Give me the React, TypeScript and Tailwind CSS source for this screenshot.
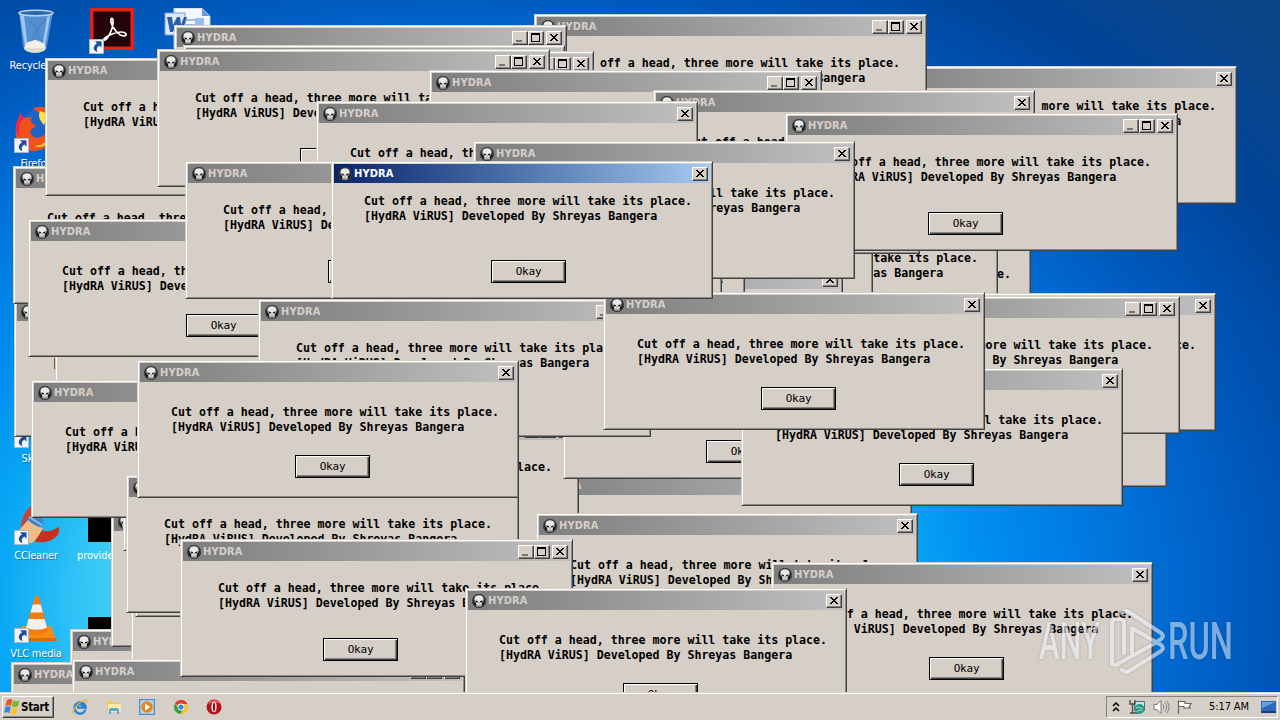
import React from "react";

type Kind = "wide" | "fixed" | "compact";
type Dialog = { x: number; t: number; kind: Kind; active?: boolean };

// Back-to-front stacking; t is the vertical centre of the caption.
const dialogs: Dialog[] = [
  { x: 855, t: 79, kind: "compact" },
  { x: 649, t: 235, kind: "fixed" },
  { x: 616, t: 219, kind: "fixed" },
  { x: 491, t: 200, kind: "fixed" },
  { x: 538, t: 129, kind: "fixed" },
  { x: 461, t: 280, kind: "fixed" },
  { x: 363, t: 240, kind: "fixed" },
  { x: 340, t: 226, kind: "fixed" },
  { x: 534, t: 27, kind: "wide" },
  { x: 174, t: 38, kind: "wide" },
  { x: 183, t: 58, kind: "fixed" },
  { x: 201, t: 64, kind: "wide" },
  { x: 14, t: 312, kind: "wide" },
  { x: 55, t: 290, kind: "fixed" },
  { x: 13, t: 179, kind: "fixed" },
  { x: 45, t: 71, kind: "wide" },
  { x: 157, t: 62, kind: "wide" },
  { x: 429, t: 83, kind: "wide" },
  { x: 653, t: 103, kind: "fixed" },
  { x: 785, t: 126, kind: "wide" },
  { x: 316, t: 114, kind: "fixed" },
  { x: 473, t: 154, kind: "fixed" },
  { x: 28, t: 232, kind: "fixed" },
  { x: 185, t: 174, kind: "wide" },
  { x: 519, t: 486, kind: "wide" },
  { x: 186, t: 431, kind: "wide" },
  { x: 563, t: 354, kind: "wide" },
  { x: 258, t: 312, kind: "wide" },
  { x: 834, t: 306, kind: "fixed" },
  { x: 785, t: 362, kind: "fixed" },
  { x: 787, t: 309, kind: "wide" },
  { x: 741, t: 381, kind: "fixed" },
  { x: 603, t: 305, kind: "fixed" },
  { x: 70, t: 642, kind: "fixed" },
  { x: 11, t: 675, kind: "fixed" },
  { x: 111, t: 522, kind: "fixed" },
  { x: 131, t: 548, kind: "fixed" },
  { x: 135, t: 492, kind: "fixed" },
  { x: 123, t: 426, kind: "fixed" },
  { x: 31, t: 393, kind: "fixed" },
  { x: 126, t: 488, kind: "wide" },
  { x: 137, t: 373, kind: "fixed" },
  { x: 72, t: 672, kind: "wide" },
  { x: 536, t: 526, kind: "fixed" },
  { x: 771, t: 575, kind: "fixed" },
  { x: 180, t: 552, kind: "wide" },
  { x: 465, t: 601, kind: "fixed" },
  { x: 331, t: 174, kind: "compact", active: true },
];

const frame: Record<Kind, string> = { wide: "w-[393px]", fixed: "w-[382px]", compact: "w-[382px]" };
const message: Record<Kind, string> = {
  wide: "mt-[20px] ml-[35px]",
  fixed: "mt-[23px] ml-[31px]",
  compact: "mt-[11px] ml-[30px]",
};
const okay: Record<Kind, string> = {
  wide: "mt-[27px] ml-[140px]",
  fixed: "mt-[20px] ml-[155px]",
  compact: "mt-[36px] ml-[157px]",
};

function Skull() {
  return (
    <svg className="h-[14px] w-[14px] shrink-0" viewBox="0 0 14 14">
      <circle cx="7" cy="7" r="6.9" fill="#141414" />
      <circle cx="7" cy="7" r="6.300" fill="none" stroke="#555" strokeWidth="0.9" />
      <path d="M2.400 5.300C2.300 2.700 4.300 1.200 7 1.200s4.700 1.500 4.600 4.100c0 1.300-.2 2.300-1 3l-.7.5-.4 3.400-.8.7-.4-1-.5 1-.8-1-.8 1-.5-1-.4 1-.8-.7-.4-3.400-.7-.5c-.8-.7-1-1.700-1-3z" fill="#e9e9e9" />
      <path d="M3.200 6.200l3 1-.6 1.300-1.700-.2zM10.800 6.200l-3 1 .6 1.300 1.700-.2zM6.600 8.600h.8v1h-.8z" fill="#161616" />
      <path d="M5 10.600h4v2.200H5z" fill="#6d6d6d" fillOpacity=".55" />
    </svg>
  );
}

function CaptionButton({ glyph }: { glyph: "min" | "max" | "close" }) {
  return (
    <div className="h-[14px] w-4 shrink-0 border border-t-white border-l-white border-r-[#404040] border-b-[#404040] bg-[#d6cfc8] shadow-[inset_-1px_-1px_0_#87837d]">
      <svg className="block h-3 w-3.5" viewBox="0 0 14 12" shapeRendering="crispEdges">
        {glyph === "min" && <path d="M3 8h6v2H3z" fill="#77736e" />}
        {glyph === "max" && <path d="M2 1h9v9H2zM3 3v6h7V3z" fill="#000" fillRule="evenodd" />}
        {glyph === "close" && (
          <path d="M3 2h2v1h1v1h2V3h1V2h2v1h-1v1H9v1H8v1h1v1h1v1h1v1H9V8H8V7H6v1H5v1H3V8h1V7h1V6h1V5H5V4H4V3H3z" fill="#000" />
        )}
      </svg>
    </div>
  );
}

function HydraDialog({ x, t, kind, active }: Dialog) {
  return (
    <section
      className={
        "absolute h-[138px] overflow-hidden border border-t-[#d6cfc8] border-l-[#d6cfc8] border-r-[#404040] border-b-[#404040] bg-[#d6cfc8] p-[2px] shadow-[inset_1px_1px_0_#fff,inset_-1px_-1px_0_#8d8883] " +
        frame[kind]
      }
      style={{ left: x, top: t - 13 }}
    >
      <header
        className={
          "flex h-[19px] items-center bg-linear-to-r pr-[2px] pl-[4px] " +
          (active ? "from-[#0a246a] to-[#a6caf0]" : "from-[#7f7e7e] to-[#c0c0c0]")
        }
      >
        <Skull />
        <span
          className={
            "ml-[2px] flex-1 pt-px font-['DejaVu_Sans_Condensed','DejaVu_Sans',sans-serif] text-[11px] leading-[18px] font-bold tracking-[0.1px] [font-stretch:condensed] " +
            (active ? "text-white" : "text-[#d6cfc8]")
          }
        >
          HYDRA
        </span>
        {kind === "wide" && (
          <>
            <CaptionButton glyph="min" />
            <CaptionButton glyph="max" />
            <span className="w-[2px]" />
          </>
        )}
        <CaptionButton glyph="close" />
      </header>
      <p
        className={
          "h-[30px] font-['DejaVu_Sans_Mono',monospace] text-[11.63px] leading-[15px] font-bold tracking-[-0.02px] whitespace-pre text-black " +
          message[kind]
        }
      >
        {"Cut off a head, three more will take its place.\n[HydRA ViRUS] Developed By Shreyas Bangera"}
      </p>
      <button
        className={
          "flex h-[23px] w-[75px] items-center justify-center border border-black bg-[#d6cfc8] font-['DejaVu_Sans_Mono',monospace] text-[11px] leading-none tracking-[-0.2px] text-black shadow-[inset_1px_1px_0_#fff,inset_-1px_-1px_0_#404040,inset_-2px_-2px_0_#87837d] " +
          okay[kind]
        }
      >
        Okay
      </button>
    </section>
  );
}

function ShortcutBadge() {
  return (
    <svg className="absolute bottom-0 left-px h-[15px] w-[15px]" viewBox="0 0 15 15">
      <path d="M.5.5h14v14H.5z" fill="#f4f6fa" stroke="#a9b8cc" />
      <path d="M6 2.200h6.500v6.500L10.400 6.600C7.900 8 7.200 10 8.400 13 4.200 11.800 3.100 7.800 8 4.300z" fill="#174f9d" />
    </svg>
  );
}

function DesktopIcon({ place, label, badge = true, children }: { place: string; label?: string; badge?: boolean; children: React.ReactNode }) {
  return (
    <div className={"absolute flex w-[76px] flex-col items-center " + place}>
      <div className="relative h-12 w-[46px]">
        {children}
        {badge && <ShortcutBadge />}
      </div>
      {label && (
        <span className="mt-[4px] text-center font-['DejaVu_Sans_Condensed','DejaVu_Sans',sans-serif] text-[11px] leading-[14px] tracking-[-0.2px] whitespace-pre text-white [font-stretch:condensed] [text-shadow:1px_1px_1px_#00306088]">
          {label}
        </span>
      )}
    </div>
  );
}

function Desktop() {
  return (
    <>
      <DesktopIcon place="left-[-1px] top-[7px]" label="Recycle Bin" badge={false}>
        <svg className="h-12 w-[46px]" viewBox="0 0 46 48">
          <path d="M5 5l4 34c2 9 22 9 24 0l6-34z" fill="#7eb2e4" fillOpacity=".65" />
          <path d="M6 8l5 32 3 2-4-33zM36 9l-5 31-3 2 5-32z" fill="#d8ebff" fillOpacity=".6" />
          <path d="M14 12l10 10-6 12M31 12L21 26l7 8" fill="none" stroke="#4b80c0" strokeOpacity=".6" strokeWidth="2" />
          <ellipse cx="21" cy="41" rx="11" ry="5" fill="#dfddd0" />
          <path d="M11 38c2-4 6-3 9-5 4 0 6 2 11 4l-1 4H11z" fill="#f2f0e8" />
          <ellipse cx="22" cy="6" rx="17" ry="2.800" fill="#2c67ae" stroke="#bcd2e8" strokeWidth="1.600" />
        </svg>
      </DesktopIcon>
      <DesktopIcon place="left-[73px] top-[6px]">
        <svg className="h-12 w-[46px]" viewBox="0 0 46 48">
          <path d="M2 2h44v42H2z" fill="#e2231a" />
          <path d="M5.500 5.500h37v35h-37z" fill="#24060a" />
          <path d="M15 34c4 2 10-11 10-18 .5-5-3-5-2 0 1 6 8 14 13 14 4-.5 2-4-3-4-6 0-15 4-18 8z" fill="none" stroke="#fff" strokeWidth="1.700" />
        </svg>
      </DesktopIcon>
      <div className="absolute top-2 left-[164px]">
        <svg className="h-[40px] w-[48px]" viewBox="0 0 48 40">
          <path d="M10 0h28l8 8v32H10z" fill="#f3f7fd" stroke="#b8cce8" />
          <path d="M38 0v8h8z" fill="#6b9bd8" />
          <path d="M22 11h18v2H22zM22 16h18v2H22z" fill="#9db9dc" />
          <path d="M31 10h9v7h-9z" fill="#9bbfea" />
          <path d="M1 5h20v22H1z" fill="#dce8f8" stroke="#789fd2" />
          <path d="M3 9h5l1 8 4-8h3l1 8 3-8h3l-5 15h-4l-1-8-4 8H6z" fill="#2b5ca8" />
        </svg>
      </div>
      <DesktopIcon place="left-[-2px] top-[105px]" label="Firefox">
        <svg className="h-12 w-[46px]" viewBox="0 0 46 48">
          <circle cx="26" cy="23" r="19" fill="#1b64c8" />
          <path d="M20 4c8-6 24 0 24 19 0 17-15 23-24 23C8 46 1 36 3 24 3 16 6 15 7 8l4 5 8-1c-3 4 0 7 4 8-2 4-7 4-5 9 3 7 15 3 18-5 2-7-5-15-16-20z" fill="#f4501e" />
          <path d="M7 8l4 5c-5 5-6 12-4 19-4-3-5-9-4-13 1-4 3-5 4-11z" fill="#f0284e" />
          <path d="M26 6c14 2 20 16 13 28-5 8-13 9-18 7 12 0 20-10 15-22-2-6-6-10-10-13z" fill="#ffd52e" />
          <path d="M27 6c-2 4-1 9 4 14l4-9z" fill="#ffe23c" />
        </svg>
      </DesktopIcon>
      <DesktopIcon place="left-[-2px] top-[400px]" label="Skype">
        <svg className="h-12 w-[46px]" viewBox="0 0 46 48">
          <circle cx="24" cy="22" r="19" fill="#009edc" />
        </svg>
      </DesktopIcon>
      <DesktopIcon place="left-[-2px] top-[497px]" label="CCleaner">
        <svg className="h-12 w-[46px]" viewBox="0 0 46 48">
          <path d="M26 4C12 10 6 24 9 36l9-5C16 21 21 13 32 8z" fill="#d33d2f" />
          <path d="M24 29c4 7 13 7 23 0 1 9-8 18-24 16l-4-11z" fill="#c7301f" />
          <path d="M12 26c2-7 7-8 12-8 5 2 7 4 6 9l-9 7z" fill="#3a84c8" />
          <path d="M7 32l8-9c5 5 10 7 15 8-3 6-6 11-11 15H8z" fill="#efbd84" />
          <path d="M16 20l13 8" stroke="#87bdea" strokeWidth="2" />
        </svg>
      </DesktopIcon>
      <DesktopIcon place="left-[-2px] top-[595px]" label={"VLC media\nplayer"}>
        <svg className="h-12 w-[46px]" viewBox="0 0 46 48">
          <path d="M9 31h29l5 14H5z" fill="#f48c16" />
          <path d="M5 43h38l1 3H5z" fill="#d66b08" />
          <path d="M22 2c1-2 3-2 4 0l9 34c-4 5-19 5-23 0z" fill="#f47b0c" />
          <path d="M19.800 9.500h8l2 8H17.500zM15.500 24h16l2.500 8.500c-5 3-16 3-21 0z" fill="#f0f0f0" />
        </svg>
      </DesktopIcon>
      <div className="absolute top-[516px] left-[77px] flex flex-col items-start">
        <div className="ml-[11px] h-[26px] w-12 bg-black" />
        <span className="mt-[7px] font-['DejaVu_Sans_Condensed','DejaVu_Sans',sans-serif] text-[11px] leading-[14px] tracking-[-0.1px] text-white [font-stretch:condensed]">provide...</span>
        <div className="mt-[54px] ml-[11px] h-[26px] w-12 bg-black" />
      </div>
    </>
  );
}

function Watermark() {
  return (
    <svg className="absolute top-[604px] left-[1034px] h-[74px] w-[204px] opacity-60 [filter:drop-shadow(0_0_1px_#00000066)]" viewBox="0 0 204 74">
      <g fill="none" stroke="#eef2f7" strokeWidth="4.200" strokeLinejoin="round" strokeLinecap="round">
        <path d="M90 49V19q0-4-5-4h-2q-5 0-5 4v41l4 1 41-23" />
        <path d="M88 9q3-3 7-1l32 21q4 3 0 6l-3 2" />
        <path d="M98 49V24l29 17q4 3 0 6L95 67q-4 2-7-1" />
      </g>
      <text x="5" y="55" textLength="61" lengthAdjust="spacingAndGlyphs" className="fill-[#eef2f7] font-['Roboto',sans-serif] text-[51px] font-medium">ANY</text>
      <text x="134" y="55" textLength="65" lengthAdjust="spacingAndGlyphs" className="fill-[#d2e0f2] font-['Roboto',sans-serif] text-[51px] font-medium">RUN</text>
    </svg>
  );
}

function WindowsFlag() {
  return (
    <svg className="h-[17px] w-[17px]" viewBox="0 0 17 17">
      <path d="M3 2c2-1.500 4-1.200 5.500-.2L7 8C5.500 7 3.500 7 1.500 8z" fill="#e8552a" />
      <path d="M9.300 2.300c2 1.200 4 1.100 6.200.1L14 8.300c-2 1.100-4 1-6.100 0z" fill="#76b82e" />
      <path d="M1.300 9c2-1.200 4-1 5.500 0l-1.500 6c-2-1.100-3.800-1-5.300-.2z" fill="#2a8bd8" />
      <path d="M7.600 9.300c2 1.100 4 1.100 6.200 0l-1.500 6c-2 1.200-4.200 1.100-6.200 0z" fill="#fbc02a" />
    </svg>
  );
}

function QuickLaunch() {
  return (
    <div className="ml-[18px] flex items-center gap-[17.500px]">
      <svg className="h-4 w-4" viewBox="0 0 16 16">
        <path d="M13.500 10.500A5.600 5.600 0 1 1 13.700 8.600H5M5 7.500c.5-3 5.500-3 6 0" fill="none" stroke="#2682d8" strokeWidth="2.300" />
        <path d="M2 14.500C-.5 14 3 7 8 3.500c4-3 8-3.200 6.800 0" fill="none" stroke="#edb52c" strokeWidth="1.300" />
      </svg>
      <svg className="h-4 w-4" viewBox="0 0 16 16">
        <path d="M1 2h6l1 2h7v9H1z" fill="#ecc75e" />
        <path d="M2 5h13v8H2z" fill="#fbeaa2" />
        <path d="M3 15v-4q0-2 2-2h6q2 0 2 2v4h-2v-3H5v3z" fill="#5aa9dc" />
      </svg>
      <svg className="h-4 w-4" viewBox="0 0 16 16">
        <path d="M.7.700h14.600v14.600H.7z" fill="#b9d8ee" stroke="#4b8fc8" strokeWidth="1.300" />
        <circle cx="8" cy="8" r="5.800" fill="#ee8212" />
        <path d="M6 4.500L11.500 8 6 11.500z" fill="#fff" />
      </svg>
      <svg className="h-4 w-4" viewBox="0 0 16 16">
        <circle cx="8" cy="8" r="7" fill="#f4c520" />
        <path d="M8 8L2 4.400A7 7 0 0 1 14.300 5H8z" fill="#dc3a2c" />
        <path d="M2 4.400A7 7 0 0 0 7.500 15L10 9.500 6 10z" fill="#2fa04a" />
        <circle cx="8" cy="8" r="3.400" fill="#fff" />
        <circle cx="8" cy="8" r="2.600" fill="#3c7fe6" />
      </svg>
      <svg className="h-4 w-4" viewBox="0 0 16 16">
        <circle cx="8" cy="8" r="7.500" fill="#b5131a" />
        <path d="M2 5c2-5 10-5 12 0-3-2-9-2-12 0z" fill="#ef6a68" />
        <ellipse cx="8" cy="8" rx="2.600" ry="5.200" fill="#f8eeee" />
        <ellipse cx="8" cy="8" rx="1.100" ry="4.400" fill="#8e0c12" />
      </svg>
    </div>
  );
}

function Tray() {
  return (
    <div className="mr-[2px] ml-auto flex h-[22px] w-[172px] items-center border border-t-[#87837d] border-r-white border-b-white border-l-[#87837d] pl-[5px]">
      <svg className="h-3 w-2" viewBox="0 0 8 12">
        <path d="M1 5l3-3 3 3M1 10l3-3 3 3" fill="none" stroke="#000" strokeWidth="1.500" />
      </svg>
      <svg className="ml-[9px] h-4 w-4" viewBox="0 0 16 16">
        <path d="M5.500 2.500h10v9h-10z" fill="#c7e5e4" stroke="#526c70" />
        <path d="M1 1v4h5V1M3.500 5v9M1 14h8" fill="none" stroke="#45494c" strokeWidth="1.300" />
        <circle cx="10.500" cy="10" r="5" fill="#269a88" />
        <path d="M7 9c3-3 5 2 7 0M8 13c1-3 4-1 5-2" stroke="#b5e8df" fill="none" />
      </svg>
      <svg className="ml-[8px] h-4 w-[17px]" viewBox="0 0 17 16">
        <path d="M1 5.500h3L8 1.500v13l-4-4H1z" fill="#fff" stroke="#777" />
        <path d="M10 5.500q2 2.500 0 5M12 3.500q3.500 4.500 0 9M14 2q4 6 0 12" stroke="#858585" fill="none" />
      </svg>
      <svg className="ml-[6px] h-4 w-[17px]" viewBox="0 0 17 16">
        <path d="M2.500 15V1.500M3 2.500h6v2h6l-2 3.500 1 1H8V7.500H3" fill="#fff" stroke="#666" strokeWidth="1.200" />
      </svg>
      <span className="ml-[16px] pt-[2px] font-['DejaVu_Sans_Condensed','DejaVu_Sans',sans-serif] text-[11px] tracking-[-0.1px] whitespace-nowrap text-black [font-stretch:condensed]">5:17 AM</span>
      <svg className="mr-[1px] ml-auto h-3 w-[15px] shrink-0" viewBox="0 0 15 12">
        <path d="M0 0h15v10H0z" fill="#2e68bd" />
        <path d="M1 1h13L1 7z" fill="#67a1e4" />
        <path d="M0 10h15v2H0z" fill="#183e7c" />
      </svg>
    </div>
  );
}

export default function App() {
  return (
    <main className="flex h-[720px] w-[1280px] flex-col overflow-hidden">
      <div className="relative h-[692px] overflow-hidden bg-[radial-gradient(ellipse_1000px_760px_at_450px_600px,#5cdaf6_25%,#36c8f6_36%,#0aa8f5_45%,#0090f0_53%,#007ae0_64%,#0062c8_76%,#0054b4_84%,#004498_96%,#0c4688_110%)]">
        <Desktop />
        {dialogs.map((d) => (
          <HydraDialog key={d.x + "-" + d.t} {...d} />
        ))}
        <Watermark />
      </div>
      <footer className="flex h-7 items-center border-t border-[#d6cfc8] bg-[#d6cfc8] shadow-[inset_0_1px_0_#fff]">
        <div className="ml-[2px] flex h-[22px] w-[52px] items-center border border-t-white border-r-[#404040] border-b-[#404040] border-l-white pl-px shadow-[inset_-1px_-1px_0_#87837d]">
          <WindowsFlag />
          <span className="pt-[2px] font-['DejaVu_Sans_Condensed','DejaVu_Sans',sans-serif] text-[11.500px] font-bold tracking-[-0.3px] text-black [font-stretch:condensed]">Start</span>
        </div>
        <QuickLaunch />
        <Tray />
      </footer>
    </main>
  );
}
